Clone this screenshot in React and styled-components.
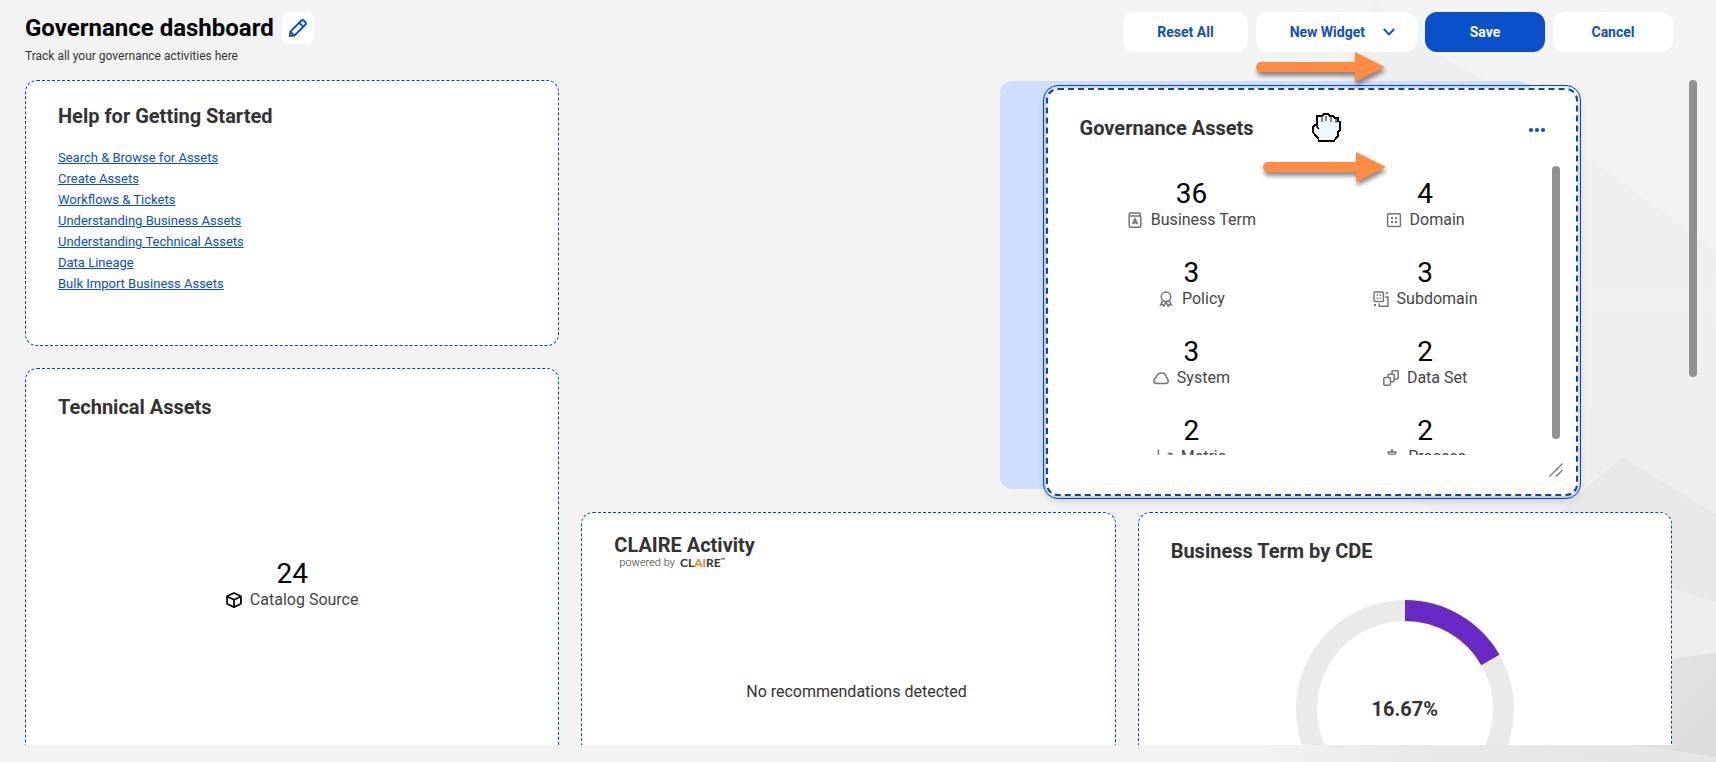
import React from 'react';
import styled, { createGlobalStyle } from 'styled-components';

const helpLinks = [
  'Search & Browse for Assets',
  'Create Assets',
  'Workflows & Tickets',
  'Understanding Business Assets',
  'Understanding Technical Assets',
  'Data Lineage',
  'Bulk Import Business Assets',
];

const PencilIcon = () => (
  <svg width='20' height='20' viewBox='0 0 20 20' fill='none' stroke='#0a50c8' strokeWidth='2'>
    <path d='M2 18 L2.4 13.6 L13.2 2.8 Q14.6 1.4 16 2.8 L17.2 4 Q18.6 5.4 17.2 6.8 L6.4 17.6 Z' />
    <path d='M11.2 4.8 L15.2 8.8 M2.4 13.6 L6.4 17.6' strokeWidth='1.8' />
  </svg>
);

const ChevronIcon = () => (
  <svg width='12' height='8' viewBox='0 0 12 8' fill='none' stroke='#0a50c8' strokeWidth='2'>
    <path d='M0.8 1 L6 6.4 L11.2 1' />
  </svg>
);

const DotsIcon = () => (
  <svg width='18' height='6' viewBox='0 0 18 6' fill='#0a50c8'>
    <circle cx='3' cy='3' r='2.1' />
    <circle cx='9' cy='3' r='2.1' />
    <circle cx='15' cy='3' r='2.1' />
  </svg>
);

const StatIcon = ({ children, color = '#757575' }) => (
  <svg width='16' height='16' viewBox='0 0 16 16' fill='none' stroke={color} strokeWidth='1.5'>
    {children}
  </svg>
);

const TermIcon = () => (
  <StatIcon>
    <path d='M2.2 4.2 V2.2 Q2.2 1 3.4 1 H13.2 M2.2 4 H13 Q13.8 4 13.8 5 V14 Q13.8 15.2 12.6 15.2 H3.4 Q2.2 15.2 2.2 14 V4 M13.2 1 V4' />
    <path d='M5.6 12.2 L8 7 L10.4 12.2 M6.6 10.6 H9.4' strokeWidth='1.7' />
  </StatIcon>
);

const DomainIcon = () => (
  <StatIcon>
    <rect x='1.6' y='1.8' width='12.8' height='12.6' rx='1' />
    <path d='M5 6.2 H7 M9 6.2 H11 M5 10 H7 M9 10 H11' strokeWidth='2' />
  </StatIcon>
);

const PolicyIcon = () => (
  <StatIcon>
    <circle cx='8' cy='5.8' r='4.8' />
    <path d='M4.8 9.6 L2.6 14 L4.8 13.6 L5.8 15.4 L8 10.8 L10.2 15.4 L11.2 13.6 L13.4 14 L11.2 9.6' />
  </StatIcon>
);

const SubdomainIcon = () => (
  <StatIcon>
    <rect x='1' y='1' width='9.4' height='9.6' rx='1' />
    <path d='M12.2 6 H15 V15.2 H6.2 V12.4' />
    <path d='M3.6 4 H5 M6.4 4 H7.8 M3.6 7.4 H5 M6.4 7.4 H7.8' strokeWidth='1.4' />
    <path d='M12.8 2 H14.8 M1 14 H3' strokeWidth='2' />
  </StatIcon>
);

const SystemIcon = () => (
  <StatIcon>
    <path d='M3.4 13.4 C1.6 13.4 0.8 12.2 0.8 10.6 C0.8 9 1.6 8.2 2.9 7.7 C3.8 4.9 5.8 3 8.8 3 C10.4 3 11.5 3.4 12.2 4.2 C13.2 5.2 12.8 6.4 13.9 7.8 C15 9.2 15.4 10.2 15.2 11.6 C15.1 12.8 14.2 13.4 13 13.4 Z' />
  </StatIcon>
);

const DataSetIcon = () => (
  <StatIcon>
    <rect x='0.8' y='7.6' width='6.6' height='7.6' rx='1' />
    <path d='M5 7.4 V5.2 Q5 4.2 6 4.2 H10.2 Q11.2 4.2 11.2 5.2 V10.8 Q11.2 11.8 10.2 11.8 H7.6' />
    <path d='M9 4 V1.8 Q9 0.8 10 0.8 H14.2 Q15.2 0.8 15.2 1.8 V8 Q15.2 9 14.2 9 H11.4' />
  </StatIcon>
);

const MetricIcon = () => (
  <StatIcon>
    <path d='M1.4 0.6 V14.6 H15 M4 10.6 L7 6.8 L10 8.8 L14.4 4.6 M10.6 4.4 H14.8 V8' />
  </StatIcon>
);

const ProcessIcon = () => (
  <StatIcon>
    <path d='M8 0.6 L9.2 3.2 H12.8 M8 0.6 L6.8 3.2 H3.2 M5 3.4 V9 M11 3.4 V9 M3 9 H13 V14.8 H3 Z' />
    <circle cx='8' cy='6' r='1' />
  </StatIcon>
);

const CubeIcon = () => (
  <StatIcon color='#000'>
    <path
      d='M8 0.9 L14.9 4.2 V11.8 L8 15.2 L1.1 11.8 V4.2 Z M1.1 4.4 L8 7.8 L14.9 4.4 M8 7.8 V15'
      strokeWidth='1.7'
      strokeLinejoin='round'
    />
  </StatIcon>
);

const GrabHand = () => (
  <svg width='29' height='29' viewBox='0 0 29 29'>
    <path
      d='M5 8 V3 H10 L12 1 H16 L18 3 H21 L23 5 H26 V8 L28 9 V17 L26 19 V23 L24 25 L22 28 H7 L6 25 L3 22 L1 19 V14 L3 12 L5 11 V8 Z'
      fill='#f0f7ff'
      stroke='#000'
      strokeWidth='1.6'
      shapeRendering='crispEdges'
    />
    <path d='M10 3 V9 M14 3 V8 M19 4 V9 M24 6 V10' stroke='#555' strokeWidth='1.4' />
    <path d='M5 11 V14 L7 16' stroke='#000' strokeWidth='1.6' fill='none' />
  </svg>
);

const Arrow = ({ length }) => (
  <svg width={length} height='30' viewBox={`0 0 ${length} 30`}>
    <path
      d={`M5 10 H${length - 30} V0 L${length} 15 L${length - 30} 30 V20 H5 A5 5 0 0 1 5 10 Z`}
      fill='#ff8c42'
    />
  </svg>
);

const Backdrop = () => (
  <BackdropSvg viewBox='0 0 516 762' preserveAspectRatio='xMaxYMin slice'>
    <defs>
      <linearGradient id='sheet' x1='0' y1='0' x2='1' y2='0'>
        <stop offset='0.1' stopColor='#f3f3f3' />
        <stop offset='0.45' stopColor='#e8e8e8' />
        <stop offset='1' stopColor='#e6e6e6' />
      </linearGradient>
      <linearGradient id='slope' x1='0' y1='0' x2='0' y2='1'>
        <stop offset='0' stopColor='#efefef' />
        <stop offset='0.4' stopColor='#f0f0f0' />
        <stop offset='1' stopColor='#ededed' />
      </linearGradient>
      <linearGradient id='corner' x1='0' y1='0' x2='1' y2='1'>
        <stop offset='0' stopColor='#e3e3e3' />
        <stop offset='1' stopColor='#dcdcdc' />
      </linearGradient>
    </defs>
    <path d='M174 0 Q166 20 140 75 L200 490 L250 520 V762 H516 V250 L382 153 L285 80 L200 35 Q180 8 174 0 Z' fill='url(#slope)' />
    <path d='M422 457 L516 514 V602 L350 550 V520 Z' fill='#e8e8e8' />
    <path d='M0 762 V740 H516 V762 Z' fill='url(#sheet)' />
    <path d='M472 659 L516 653 V757 L434 745 Z' fill='url(#corner)' />
  </BackdropSvg>
);

const assets = [
  { count: 36, label: 'Business Term', Icon: TermIcon },
  { count: 4, label: 'Domain', Icon: DomainIcon },
  { count: 3, label: 'Policy', Icon: PolicyIcon },
  { count: 3, label: 'Subdomain', Icon: SubdomainIcon },
  { count: 3, label: 'System', Icon: SystemIcon },
  { count: 2, label: 'Data Set', Icon: DataSetIcon },
  { count: 2, label: 'Metric', Icon: MetricIcon },
  { count: 2, label: 'Process', Icon: ProcessIcon },
];

const Stat = ({ count, label, Icon }) => (
  <StatItem>
    <StatCount>{count}</StatCount>
    <StatLabel>
      <Icon />
      {label}
    </StatLabel>
  </StatItem>
);

const Donut = ({ value }) => {
  const r = 98.5;
  const length = 2 * Math.PI * r;
  const filled = (length * value) / 100;

  return (
    <DonutWrap>
      <svg width='220' height='220' viewBox='0 0 220 220' fill='none' strokeWidth='21'>
        <g transform='rotate(-90 110 110)'>
          <circle cx='110' cy='110' r={r} stroke='#eaeaea' />
          <circle cx='110' cy='110' r={r} stroke='#fff' strokeDasharray={`${filled + 2} ${length}`} strokeDashoffset='1' />
          <circle cx='110' cy='110' r={r} stroke='#6929c4' strokeDasharray={`${filled} ${length}`} />
        </g>
      </svg>
      <DonutValue>{value}%</DonutValue>
    </DonutWrap>
  );
};

const App = () => {
  return (
    <Page>
      <GlobalStyle />
      <Backdrop />
      <Header>
        <div>
          <TitleRow>
            <PageTitle>Governance dashboard</PageTitle>
            <EditButton type='button' aria-label='Edit'>
              <PencilIcon />
            </EditButton>
          </TitleRow>
          <Subtitle>Track all your governance activities here</Subtitle>
        </div>
        <Actions>
          <Button type='button'>Reset All</Button>
          <Button type='button' $menu>
            New Widget
            <ChevronIcon />
          </Button>
          <Button type='button' $primary>
            Save
          </Button>
          <Button type='button'>Cancel</Button>
        </Actions>
      </Header>

      <Main>
        <Board>
          <Card $col={1} $row={1} $rows={2}>
            <CardHeader $compact>
              <CardTitle>Help for Getting Started</CardTitle>
            </CardHeader>
            <LinkList>
              {helpLinks.map((text) => (
                <li key={text}>
                  <HelpLink href='#'>{text}</HelpLink>
                </li>
              ))}
            </LinkList>
          </Card>

          <Card $col={1} $row={3} $rows={3}>
            <CardHeader>
              <CardTitle>Technical Assets</CardTitle>
            </CardHeader>
            <CenterBody>
              <Stat count={24} label='Catalog Source' Icon={CubeIcon} />
            </CenterBody>
          </Card>

          <Card $col={5} $row={4} $rows={2}>
            <CardHeader>
              <div>
                <CardTitle>CLAIRE Activity</CardTitle>
                <PoweredBy>
                  powered by
                  <Claire>
                    CL<em>AI</em>RE<sup>™</sup>
                  </Claire>
                </PoweredBy>
              </div>
            </CardHeader>
            <EmptyBody>No recommendations detected</EmptyBody>
          </Card>

          <Card $col={9} $row={4} $rows={3}>
            <CardHeader>
              <CardTitle>Business Term by CDE</CardTitle>
            </CardHeader>
            <ChartBody>
              <Donut value={16.67} />
            </ChartBody>
          </Card>

          <DropSlot>
            <DraggedCard>
              <CardHeader>
                <CardTitle>Governance Assets</CardTitle>
                <MenuButton type='button' aria-label='More'>
                  <DotsIcon />
                </MenuButton>
              </CardHeader>
              <ScrollBody>
                <StatGrid>
                  {assets.map((asset) => (
                    <Stat key={asset.label} {...asset} />
                  ))}
                </StatGrid>
                <ScrollThumb $height='273px' />
              </ScrollBody>
              <ResizeHandle>
                <svg width='14' height='14' viewBox='0 0 14 14' stroke='#757575' strokeWidth='1.2'>
                  <path d='M0.5 13.5 L13.5 0.5 M7 13.5 L13.5 7' />
                </svg>
              </ResizeHandle>
              <Cursor>
                <GrabHand />
              </Cursor>
            </DraggedCard>
          </DropSlot>
        </Board>
        <ScrollThumb $height='297px' />
      </Main>

      <Pointer $top='52px' $right='331px'>
        <Arrow length={129} />
      </Pointer>
      <Pointer $top='152px' $right='330px'>
        <Arrow length={123} />
      </Pointer>
    </Page>
  );
};

export default App;

const GlobalStyle = createGlobalStyle`
  * {
    box-sizing: border-box;
  }

  body {
    margin: 0;
    background: #f3f3f3;
    color: #333;
    font-family: Roboto, 'Liberation Sans', sans-serif;
  }

  button {
    font-family: inherit;
    cursor: pointer;
  }
`;

const Page = styled.div`
  position: relative;
  display: flex;
  flex-direction: column;
  height: 100vh;
  padding-bottom: 17px;
  overflow: hidden;
`;

const BackdropSvg = styled.svg`
  position: absolute;
  top: 0;
  right: 0;
  height: 100%;
`;

const Header = styled.header`
  position: relative;
  display: flex;
  justify-content: space-between;
  align-items: flex-start;
  height: 80px;
  padding: 12px 43px 0 25px;
`;

const TitleRow = styled.div`
  display: flex;
  align-items: center;
  gap: 8px;
`;

const PageTitle = styled.h1`
  margin: 0;
  color: #000;
  font-size: 24px;
  font-weight: 700;
  line-height: 32px;
`;

const EditButton = styled.button`
  display: grid;
  place-items: center;
  width: 32px;
  height: 32px;
  padding: 0;
  border: 0;
  border-radius: 8px;
  background: #fff;
`;

const Subtitle = styled.p`
  margin: 4px 0 0;
  font-size: 12px;
  line-height: 16px;
`;

const Actions = styled.div`
  display: flex;
  gap: 8px;
`;

const Button = styled.button`
  display: flex;
  align-items: center;
  justify-content: center;
  gap: 18px;
  min-width: 120px;
  height: 40px;
  padding: ${({ $menu }) => ($menu ? '0 22px 0 34px' : '0 34px')};
  border: 0;
  border-radius: 12px;
  background: ${({ $primary }) => ($primary ? '#0a50c8' : '#fff')};
  color: ${({ $primary }) => ($primary ? '#fff' : '#0a50c8')};
  font-size: 14px;
  font-weight: 700;
  line-height: 20px;
`;

const Main = styled.main`
  position: relative;
  display: flex;
  flex: 1;
  gap: 17px;
  min-height: 0;
  padding: 0 19px 0 25px;
`;

const Board = styled.div`
  display: grid;
  flex: 1;
  grid-template-columns: repeat(12, minmax(0, 1fr));
  grid-auto-rows: 122px;
  gap: 22px;
  overflow: hidden;
`;

const Card = styled.section`
  display: flex;
  flex-direction: column;
  grid-column: ${({ $col }) => $col} / span 4;
  grid-row: ${({ $row, $rows }) => `${$row} / span ${$rows}`};
  border: 1px dashed #0047bb;
  border-radius: 12px;
  background: #fff;
`;

const CardHeader = styled.div`
  display: flex;
  flex-shrink: 0;
  align-items: center;
  justify-content: space-between;
  height: 48px;
  margin-top: ${({ $compact }) => ($compact ? '11px' : '14px')};
  padding: 0 23px 0 32px;
`;

const CardTitle = styled.h2`
  margin: 0;
  font-size: 20px;
  font-weight: 700;
  line-height: 24px;
`;

const LinkList = styled.ul`
  margin: 7px 0 0;
  padding: 0 32px;
  list-style: none;
  font-size: 13px;
  line-height: 21px;
`;

const HelpLink = styled.a`
  color: #0a50c8;
`;

const CenterBody = styled.div`
  display: flex;
  flex: 1;
  align-items: center;
  justify-content: center;
  padding-bottom: 40px;
`;

const EmptyBody = styled.div`
  display: flex;
  flex: 1;
  align-items: center;
  justify-content: center;
  padding: 32px 0 0 16px;
  font-size: 16px;
  line-height: 24px;
`;

const ChartBody = styled.div`
  display: flex;
  justify-content: center;
  padding-top: 24px;
`;

const PoweredBy = styled.div`
  display: flex;
  align-items: center;
  gap: 5px;
  padding-left: 5px;
  font-size: 11px;
  font-weight: 300;
  line-height: 12px;
`;

const Claire = styled.span`
  font-family: Lato, sans-serif;
  font-size: 12px;
  font-weight: 700;

  em {
    color: #f58220;
    font-style: normal;
  }

  sup {
    font-size: 6px;
    line-height: 0;
  }
`;

const DonutWrap = styled.div`
  display: grid;
  place-items: center;

  > * {
    grid-area: 1 / 1;
  }
`;

const DonutValue = styled.span`
  font-size: 20px;
  font-weight: 700;
  line-height: 24px;
`;

const DropSlot = styled.div`
  position: relative;
  grid-column: 8 / span 4;
  grid-row: 1 / span 3;
  margin: 1px;
  border-radius: 12px;
  background: #cfdefb;
`;

const DraggedCard = styled.section`
  position: absolute;
  top: 7px;
  left: 46px;
  display: flex;
  flex-direction: column;
  width: 100%;
  height: 100%;
  padding-bottom: 39px;
  border: 2px dashed #0047bb;
  border-radius: 12px;
  outline: 1px solid #0047bb;
  outline-offset: 2px;
  background: #fff;
  box-shadow: 0 4px 8px rgba(0, 0, 0, 0.2);
`;

const MenuButton = styled.button`
  display: grid;
  place-items: center;
  width: 32px;
  height: 32px;
  padding: 4px 0 0;
  border: 0;
  background: none;
`;

const ScrollBody = styled.div`
  display: flex;
  flex: 1;
  gap: 10px;
  min-height: 0;
  margin-top: 14px;
  padding: 0 16px 0 27px;
`;

const StatGrid = styled.div`
  display: grid;
  flex: 1;
  grid-template-columns: 1fr 1fr;
  align-content: start;
  row-gap: 27px;
  padding-top: 12px;
  overflow: hidden;
`;

const ScrollThumb = styled.div`
  flex-shrink: 0;
  width: 8px;
  height: ${({ $height }) => $height};
  border-radius: 4px;
  background: #919191;
`;

const StatItem = styled.div`
  display: flex;
  flex-direction: column;
  align-items: center;
`;

const StatCount = styled.div`
  color: #000;
  font-size: 28px;
  line-height: 32px;
`;

const StatLabel = styled.div`
  display: flex;
  align-items: center;
  gap: 8px;
  color: #464646;
  font-size: 16px;
  line-height: 20px;
`;

const ResizeHandle = styled.div`
  position: absolute;
  right: 13px;
  bottom: 17px;
  display: flex;
`;

const Cursor = styled.div`
  position: absolute;
  top: 23px;
  left: 264px;
  display: flex;
`;

const Pointer = styled.div`
  position: absolute;
  top: ${({ $top }) => $top};
  right: ${({ $right }) => $right};
  display: flex;
  filter: drop-shadow(1px 4px 2px rgba(0, 0, 0, 0.45));
`;
